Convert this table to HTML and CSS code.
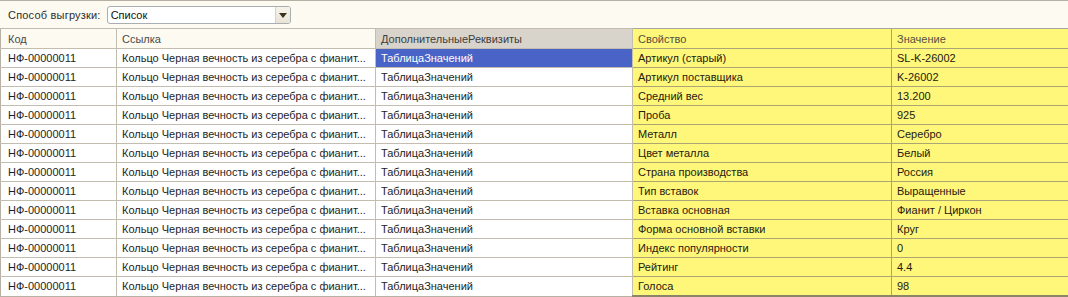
FILE: index.html
```html
<!DOCTYPE html>
<html lang="ru">
<head>
<meta charset="utf-8">
<link rel="stylesheet" href="styles.css">
</head>
<body>
<div class="toolbar">
  <span class="label">Способ выгрузки:</span>
  <div class="combo">
    <span class="combo-value">Список</span>
    <span class="combo-btn"><svg width="8" height="5" viewBox="0 0 8 5"><path d="M0 0h8L4 5z" fill="#3a3020"/></svg></span>
  </div>
</div>
<table class="grid">
  <colgroup>
    <col class="c1"><col class="c2"><col class="c3"><col class="c4"><col class="c5">
  </colgroup>
  <thead>
    <tr>
      <th>Код</th>
      <th>Ссылка</th>
      <th class="h-gray">ДополнительныеРеквизиты</th>
      <th class="y y-first">Свойство</th>
      <th class="y">Значение</th>
    </tr>
  </thead>
  <tbody>
    <tr><td>НФ-00000011</td><td>Кольцо Черная вечность из серебра с фианит...</td><td class="sel">ТаблицаЗначений</td><td class="y y-first">Артикул (старый)</td><td class="y">SL-K-26002</td></tr>
    <tr><td>НФ-00000011</td><td>Кольцо Черная вечность из серебра с фианит...</td><td>ТаблицаЗначений</td><td class="y y-first">Артикул поставщика</td><td class="y">K-26002</td></tr>
    <tr><td>НФ-00000011</td><td>Кольцо Черная вечность из серебра с фианит...</td><td>ТаблицаЗначений</td><td class="y y-first">Средний вес</td><td class="y">13.200</td></tr>
    <tr><td>НФ-00000011</td><td>Кольцо Черная вечность из серебра с фианит...</td><td>ТаблицаЗначений</td><td class="y y-first">Проба</td><td class="y">925</td></tr>
    <tr><td>НФ-00000011</td><td>Кольцо Черная вечность из серебра с фианит...</td><td>ТаблицаЗначений</td><td class="y y-first">Металл</td><td class="y">Серебро</td></tr>
    <tr><td>НФ-00000011</td><td>Кольцо Черная вечность из серебра с фианит...</td><td>ТаблицаЗначений</td><td class="y y-first">Цвет металла</td><td class="y">Белый</td></tr>
    <tr><td>НФ-00000011</td><td>Кольцо Черная вечность из серебра с фианит...</td><td>ТаблицаЗначений</td><td class="y y-first">Страна производства</td><td class="y">Россия</td></tr>
    <tr><td>НФ-00000011</td><td>Кольцо Черная вечность из серебра с фианит...</td><td>ТаблицаЗначений</td><td class="y y-first">Тип вставок</td><td class="y">Выращенные</td></tr>
    <tr><td>НФ-00000011</td><td>Кольцо Черная вечность из серебра с фианит...</td><td>ТаблицаЗначений</td><td class="y y-first">Вставка основная</td><td class="y">Фианит / Циркон</td></tr>
    <tr><td>НФ-00000011</td><td>Кольцо Черная вечность из серебра с фианит...</td><td>ТаблицаЗначений</td><td class="y y-first">Форма основной вставки</td><td class="y">Круг</td></tr>
    <tr><td>НФ-00000011</td><td>Кольцо Черная вечность из серебра с фианит...</td><td>ТаблицаЗначений</td><td class="y y-first">Индекс популярности</td><td class="y">0</td></tr>
    <tr><td>НФ-00000011</td><td>Кольцо Черная вечность из серебра с фианит...</td><td>ТаблицаЗначений</td><td class="y y-first">Рейтинг</td><td class="y">4.4</td></tr>
    <tr class="last"><td>НФ-00000011</td><td>Кольцо Черная вечность из серебра с фианит...</td><td>ТаблицаЗначений</td><td class="y y-first">Голоса</td><td class="y">98</td></tr>
  </tbody>
</table>
</body>
</html>
```
FILE: styles.css
```css
html, body {
  margin: 0;
  padding: 0;
  background: #fcfaf1;
  font-family: "Liberation Sans", Arial, sans-serif;
  font-size: 11px;
  color: #1e1e1e;
  overflow: hidden;
}

.toolbar {
  height: 28px;
  border-top: 1px solid #b4b0a4;
  display: flex;
  align-items: center;
  padding-left: 8px;
  box-sizing: border-box;
  gap: 6px;
}

.label {
  color: #2e2e2e;
  letter-spacing: 0.2px;
}

.combo {
  width: 184px;
  height: 18px;
  box-sizing: border-box;
  border: 1px solid #a9aeb3;
  border-radius: 3px;
  background: #fff;
  display: flex;
  align-items: center;
  margin-top: 1px;
}

.combo-value {
  flex: 1;
  padding-left: 3px;
  color: #111;
}

.combo-btn {
  width: 14px;
  height: 16px;
  border-left: 1px solid #d6d2c4;
  background: linear-gradient(#f6f3ea, #e8e3d5);
  border-radius: 0 2px 2px 0;
  display: flex;
  align-items: center;
  justify-content: center;
}

.grid {
  border-collapse: collapse;
  table-layout: fixed;
  width: 1069px;
  margin-left: 0;
  border-top: 1px solid #b8b2b8;
}

.c1 { width: 116px; }
.c2 { width: 259px; }
.c3 { width: 257px; }
.c4 { width: 259px; }
.c5 { width: 178px; }

.grid th, .grid td {
  padding: 1px 0 0 5px;
  border: 1px solid #c2bdaf;
  text-align: left;
  white-space: nowrap;
  overflow: hidden;
  font-weight: normal;
  vertical-align: middle;
}

.grid th {
  height: 18px;
  line-height: 18px;
  background: #fcfaf1;
  color: #4a4a4a;
}

.grid td {
  height: 17px;
  line-height: 17px;
  background: #fff;
}

.grid tr > :first-child {
  border-left: 1px solid #b6b1a4;
  padding-left: 7px;
}

.grid th.h-gray {
  background: #d8d4cb;
  color: #3c3c3c;
}

.grid td.sel {
  background: #4a63c6;
  color: #fff;
}

.grid .y {
  background: #fff77a;
  border-color: #aba473;
  color: #262010;
}

.grid th.y {
  color: #555040;
  border-top: 1px solid #a8a4a0;
}

.grid .y-first {
  border-left: 1px solid #9c987c;
}

.grid .y + .y {
  border-right: none;
}

.grid tr.last td {
  border-bottom: 1px solid #b6b1a4;
}

.grid tr.last td.y {
  border-bottom: 2px solid #8a8468;
}
```
